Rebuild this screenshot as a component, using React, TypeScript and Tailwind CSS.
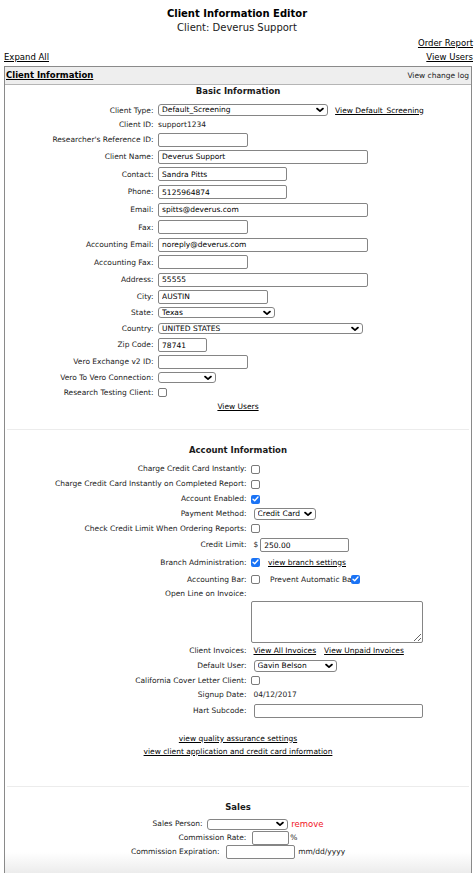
import type { ReactNode } from 'react'

// Form controls sized like the compact legacy admin screens
function TextInput({ w, value = '' }: { w: string; value?: string }) {
  return (
    <input
      readOnly
      defaultValue={value}
      className={`${w} h-[14px] rounded-[2px] border border-[#858585] bg-white px-[3px] text-[7.5px] leading-[12px] text-black outline-none`}
    />
  )
}

function Select({ w, value = '', h = 'h-[12px]' }: { w: string; value?: string; h?: string }) {
  return (
    <div className={`relative ${w} ${h}`}>
      <select
        defaultValue={value}
        className={`${w} ${h} appearance-none rounded-[3px] border border-[#858585] bg-white pl-[3px] text-[7.5px] leading-[10px] text-black outline-none`}
      >
        <option value={value}>{value}</option>
      </select>
      <svg
        className="pointer-events-none absolute right-[4px] top-1/2 -translate-y-1/2"
        width="8"
        height="5"
        viewBox="0 0 8 5"
      >
        <path d="M1 1l3 2.7L7 1" stroke="#000" strokeWidth="1.7" fill="none" strokeLinecap="round" strokeLinejoin="round" />
      </svg>
    </div>
  )
}

function Checkbox({ checked = false, className = '' }: { checked?: boolean; className?: string }) {
  if (checked) {
    return (
      <span className={`flex h-[9px] w-[9px] items-center justify-center rounded-[2px] bg-[#1a73f5] ${className}`}>
        <svg width="7" height="6" viewBox="0 0 7 6">
          <path d="M1 3.2l1.7 1.6L6 1" stroke="#fff" strokeWidth="1.3" fill="none" strokeLinecap="round" strokeLinejoin="round" />
        </svg>
      </span>
    )
  }
  return <span className={`block h-[9px] w-[9px] rounded-[2px] border border-[#7a7a7a] bg-white ${className}`} />
}

function A({ children, className = '' }: { children: ReactNode; className?: string }) {
  return (
    <a href="#" className={`text-black underline underline-offset-[1px] ${className}`}>
      {children}
    </a>
  )
}

// label column is right aligned, field column flows from its left edge
function BasicRow({ label, h, children }: { label?: string; h: string; children?: ReactNode }) {
  return (
    <div className={`flex items-center ${h}`}>
      <div className="w-[103px] shrink-0 whitespace-nowrap text-right">{label}</div>
      <div className="flex items-center pl-[4.6px]">{children}</div>
    </div>
  )
}

function AccountRow({ label, h, children }: { label?: string; h: string; children?: ReactNode }) {
  return (
    <div className={`flex items-center ${h}`}>
      <div className="w-[193px] shrink-0 whitespace-nowrap text-right">{label}</div>
      <div className="flex items-center">{children}</div>
    </div>
  )
}

function BasicInformation() {
  return (
    <div>
      <div className="flex h-[13px] items-center justify-center text-[8.5px] font-bold">Basic Information</div>
      <div className="mx-auto mt-[5px] w-[375px] text-[7.5px]">
        <BasicRow label="Client Type:" h="h-[14.5px]">
          <Select w="w-[170px]" value="Default_Screening" />
          <A className="ml-[7px]">View Default_Screening</A>
        </BasicRow>
        <BasicRow label="Client ID:" h="h-[14.5px]">
          <span>support1234</span>
        </BasicRow>
        <BasicRow label="Researcher's Reference ID:" h="h-[16px]">
          <TextInput w="w-[90px]" />
        </BasicRow>
        <BasicRow label="Client Name:" h="h-[17.5px]">
          <TextInput w="w-[210px]" value="Deverus Support" />
        </BasicRow>
        <BasicRow label="Contact:" h="h-[17.5px]">
          <TextInput w="w-[129px]" value="Sandra Pitts" />
        </BasicRow>
        <BasicRow label="Phone:" h="h-[18px]">
          <TextInput w="w-[129px]" value="5125964874" />
        </BasicRow>
        <BasicRow label="Email:" h="h-[17.5px]">
          <TextInput w="w-[210px]" value="spitts@deverus.com" />
        </BasicRow>
        <BasicRow label="Fax:" h="h-[17.5px]">
          <TextInput w="w-[90px]" />
        </BasicRow>
        <BasicRow label="Accounting Email:" h="h-[17.5px]">
          <TextInput w="w-[210px]" value="noreply@deverus.com" />
        </BasicRow>
        <BasicRow label="Accounting Fax:" h="h-[17.5px]">
          <TextInput w="w-[90px]" />
        </BasicRow>
        <BasicRow label="Address:" h="h-[17.5px]">
          <TextInput w="w-[210px]" value="55555" />
        </BasicRow>
        <BasicRow label="City:" h="h-[16.5px]">
          <TextInput w="w-[110px]" value="AUSTIN" />
        </BasicRow>
        <BasicRow label="State:" h="h-[15.5px]">
          <Select w="w-[117px]" h="h-[11px]" value="Texas" />
        </BasicRow>
        <BasicRow label="Country:" h="h-[16px]">
          <Select w="w-[205px]" h="h-[11px]" value="UNITED STATES" />
        </BasicRow>
        <BasicRow label="Zip Code:" h="h-[17px]">
          <TextInput w="w-[49px]" value="78741" />
        </BasicRow>
        <BasicRow label="Vero Exchange v2 ID:" h="h-[16.5px]">
          <TextInput w="w-[90px]" />
        </BasicRow>
        <BasicRow label="Vero To Vero Connection:" h="h-[15.5px]">
          <Select w="w-[58px]" h="h-[11px]" />
        </BasicRow>
        <BasicRow label="Research Testing Client:" h="h-[14.5px]">
          <Checkbox />
        </BasicRow>
      </div>
      <div className="flex h-[14px] items-center justify-center text-[7.5px]">
        <A>View Users</A>
      </div>
    </div>
  )
}

function AccountInformation() {
  return (
    <div>
      <div className="flex h-[14px] items-center justify-center text-[8.5px] font-bold">Account Information</div>
      <div className="mx-auto mt-[4px] w-[369px] text-[7.5px]">
        <AccountRow label="Charge Credit Card Instantly:" h="h-[15px]">
          <Checkbox className="ml-[4.5px]" />
        </AccountRow>
        <AccountRow label="Charge Credit Card Instantly on Completed Report:" h="h-[15px]">
          <Checkbox className="ml-[4.5px]" />
        </AccountRow>
        <AccountRow label="Account Enabled:" h="h-[15px]">
          <Checkbox checked className="ml-[4.5px]" />
        </AccountRow>
        <AccountRow label="Payment Method:" h="h-[14.5px]">
          <span className="ml-[7px]">
            <Select w="w-[62px]" value="Credit Card" />
          </span>
        </AccountRow>
        <AccountRow label="Check Credit Limit When Ordering Reports:" h="h-[15.5px]">
          <Checkbox className="ml-[4.5px]" />
        </AccountRow>
        <AccountRow label="Credit Limit:" h="h-[17px]">
          <span className="ml-[7px]">$</span>
          <span className="ml-[2px]">
            <TextInput w="w-[89px]" value="250.00" />
          </span>
        </AccountRow>
        <AccountRow label="Branch Administration:" h="h-[17.5px]">
          <Checkbox checked className="ml-[4.5px]" />
          <A className="ml-[8px] text-[7.5px]">view branch settings</A>
        </AccountRow>
        <AccountRow label="Accounting Bar:" h="h-[16.5px]">
          <Checkbox className="ml-[4.5px]" />
          <span className="ml-[10px]">Prevent Automatic Bar</span>
          <Checkbox checked className="relative -ml-[4px]" />
        </AccountRow>
        <AccountRow label="Open Line on Invoice:" h="h-[13px]" />
        <AccountRow h="h-[43px]">
          <textarea
            readOnly
            className="ml-[4px] h-[42px] w-[172px] resize rounded-[2px] border border-[#858585] bg-white outline-none"
          />
        </AccountRow>
        <AccountRow label="Client Invoices:" h="h-[15px]">
          <A className="ml-[7px]">View All Invoices</A>
          <A className="ml-[8px]">View Unpaid Invoices</A>
        </AccountRow>
        <AccountRow label="Default User:" h="h-[14.5px]">
          <span className="ml-[7px]">
            <Select w="w-[83px]" value="Gavin Belson" />
          </span>
        </AccountRow>
        <AccountRow label="California Cover Letter Client:" h="h-[15px]">
          <Checkbox className="ml-[4.5px]" />
        </AccountRow>
        <AccountRow label="Signup Date:" h="h-[13.5px]">
          <span className="ml-[7px]">04/12/2017</span>
        </AccountRow>
        <AccountRow label="Hart Subcode:" h="h-[18px]">
          <span className="ml-[7px]">
            <TextInput w="w-[169px]" />
          </span>
        </AccountRow>
      </div>
      <div className="mt-[12.5px] flex h-[13px] items-center justify-center text-[7.5px]">
        <A>view quality assurance settings</A>
      </div>
      <div className="flex h-[13px] items-center justify-center text-[7.5px]">
        <A>view client application and credit card information</A>
      </div>
    </div>
  )
}

function Sales() {
  return (
    <div className="bg-gradient-to-b from-white from-75% to-[#ebebeb] pb-[14px] pt-[13.5px]">
      <div className="flex h-[14px] items-center justify-center text-[8.5px] font-bold">Sales</div>
      <div className="mt-[3px] text-[7.5px]">
        <div className="flex h-[14px] items-center justify-center">
          <span>Sales Person:</span>
          <span className="ml-[4px]">
            <Select w="w-[81px]" h="h-[11px]" />
          </span>
          <span className="ml-[3.5px] text-[8.5px] text-[#f0141e]">remove</span>
        </div>
        <div className="flex h-[13.5px] items-center justify-center">
          <span>Commission Rate:</span>
          <span className="ml-[5.5px]">
            <TextInput w="w-[37px]" />
          </span>
          <span className="ml-[1.5px]">%</span>
        </div>
        <div className="flex h-[15px] items-center justify-center">
          <span>Commission Expiration:</span>
          <span className="ml-[6.5px]">
            <TextInput w="w-[69px]" />
          </span>
          <span className="ml-[3px]">mm/dd/yyyy</span>
        </div>
      </div>
    </div>
  )
}

export default function App() {
  return (
    <div className="min-h-[873px] bg-white font-['DejaVu_Sans',Verdana,sans-serif] text-[#1a1a1a]">
      <div className="pt-[8px] text-center">
        <div className="h-[12px] text-[10px] font-bold leading-[12px] text-black">Client Information Editor</div>
        <div className="h-[16px] text-[10px] leading-[16px]">Client: Deverus Support</div>
      </div>
      <div className="mt-[1px] flex h-[12px] items-center justify-end pr-[1px] text-[8.5px]">
        <A>Order Report</A>
      </div>
      <div className="mt-[2px] flex h-[12px] items-center justify-between pl-[4px] pr-[1px] text-[8.5px]">
        <A>Expand All</A>
        <A>View Users</A>
      </div>

      <div className="ml-[4px] mr-[2px] mt-[3px] border border-b-0 border-[#8a8a8a]">
        <div className="flex h-[18px] items-center justify-between border-b border-[#b5b5b5] bg-[#eeeeee] pl-[1px] pr-[2px]">
          <A className="text-[8.5px] font-bold">Client Information</A>
          <span className="text-[7.5px]">View change log</span>
        </div>

        <BasicInformation />
        <div className="mx-[2px] mt-[14.5px] border-t border-[#ececec]" />
        <div className="pt-[14px]">
          <AccountInformation />
        </div>
        <div className="mx-[2px] mt-[27.5px] border-t border-[#ececec]" />
        <Sales />
      </div>
    </div>
  )
}
